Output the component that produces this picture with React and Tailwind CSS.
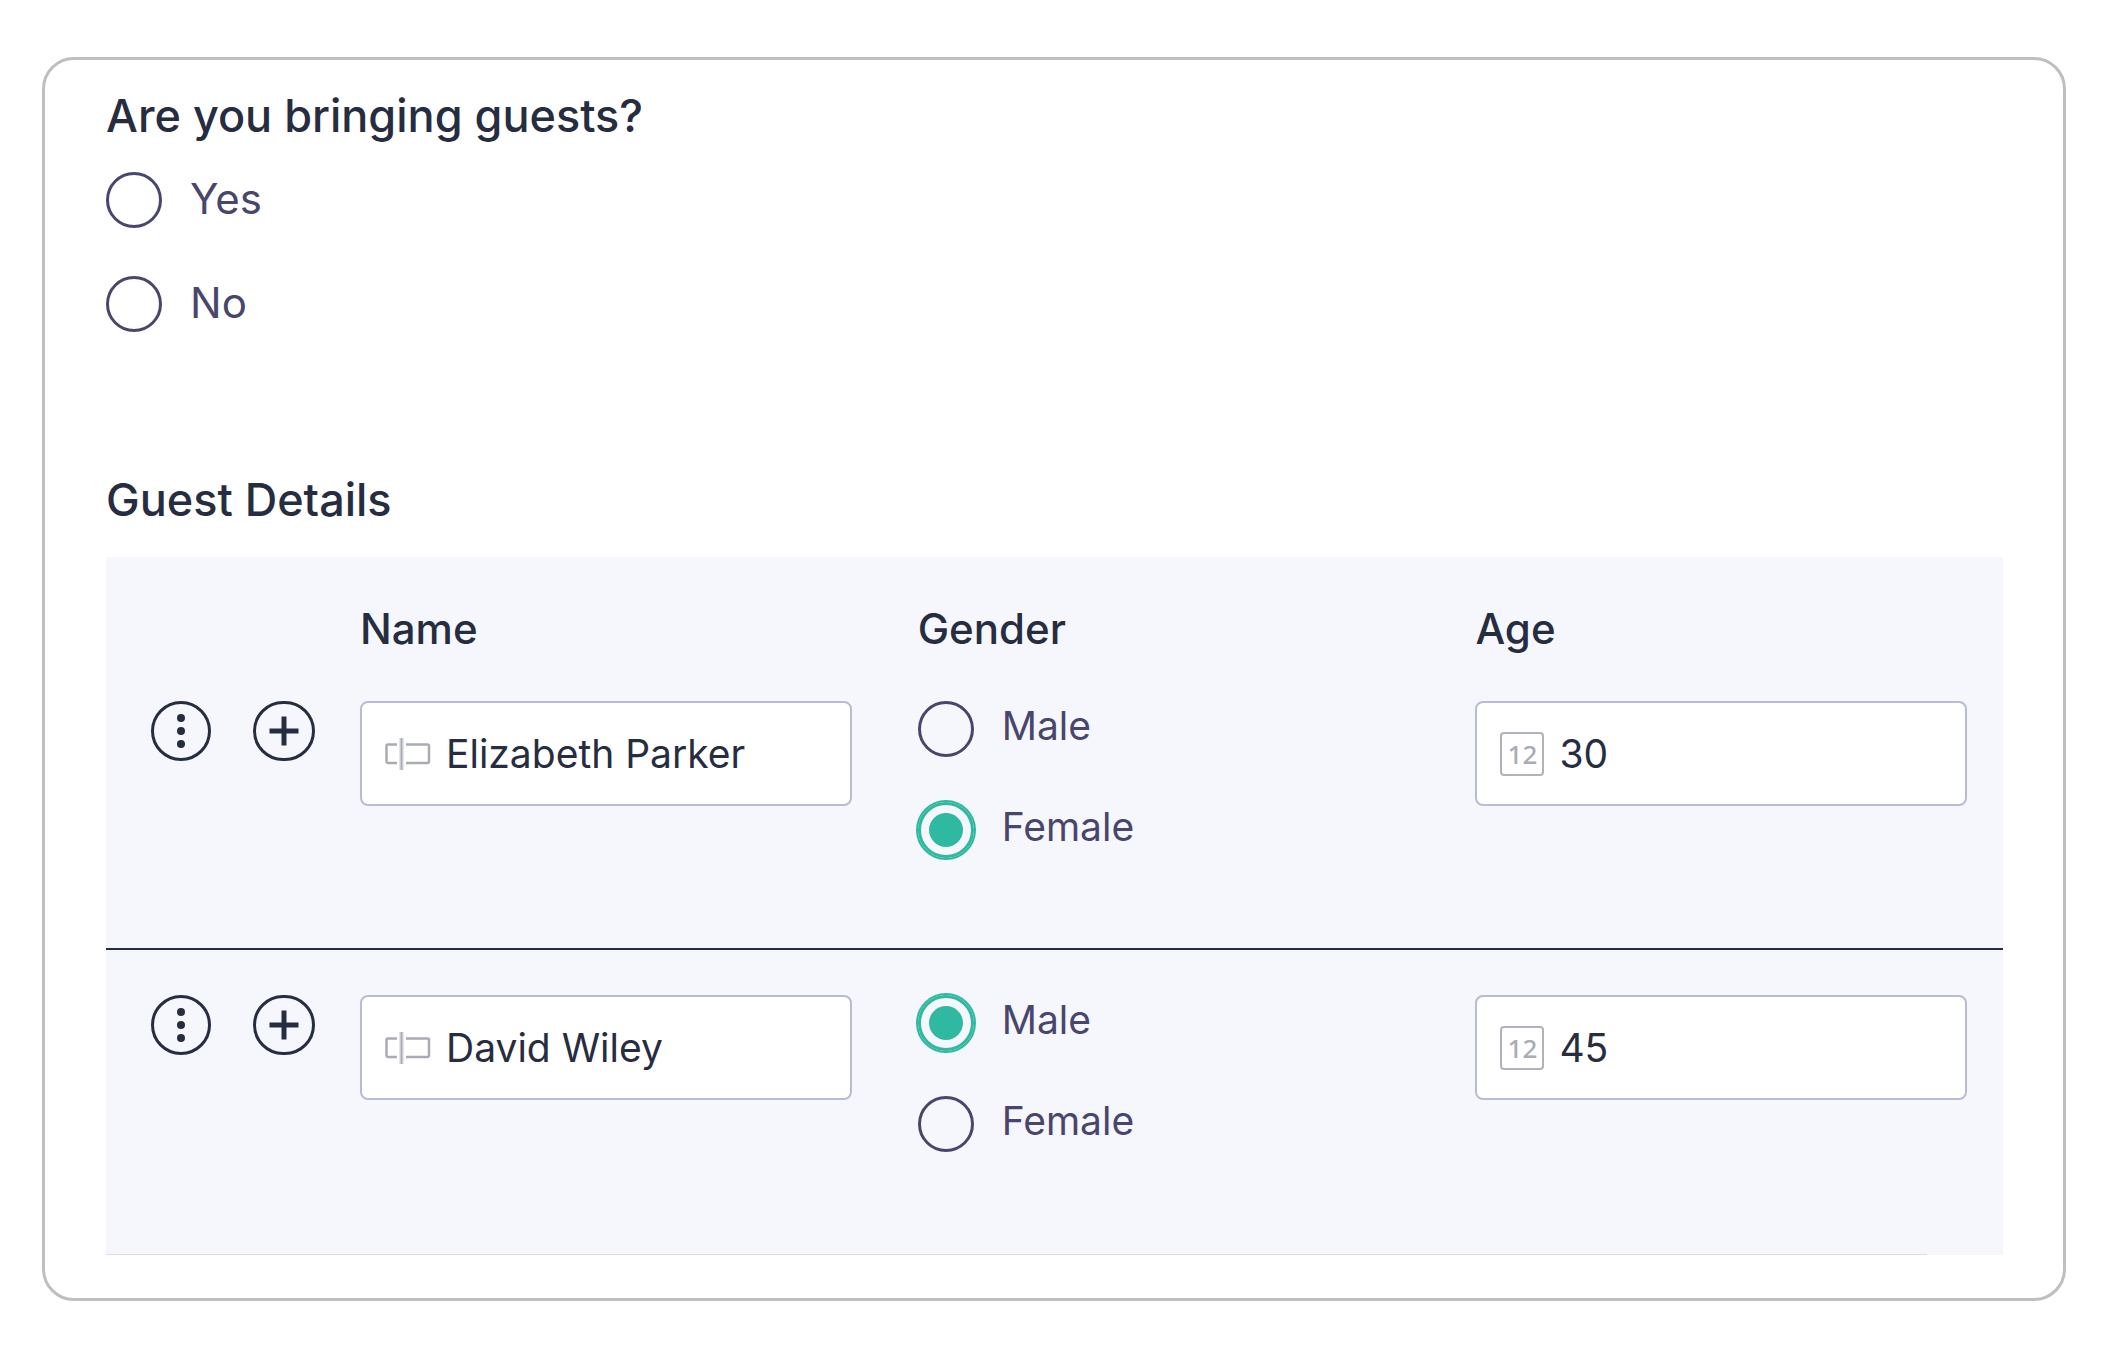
import React from "react";

const guests = [
  { id: "guest-1", name: "Elizabeth Parker", gender: "Female", age: "30" },
  { id: "guest-2", name: "David Wiley", gender: "Male", age: "45" },
];

function Radio({ name, label, checked = false, textClass }) {
  return (
    <label className="flex h-14 items-center gap-7 text-[#48466d]">
      <input
        type="radio"
        name={name}
        value={label}
        defaultChecked={checked}
        className="grid size-14 shrink-0 appearance-none place-items-center rounded-full border-3 border-[#48466d] checked:border-3 checked:border-[#2fb9a0] checked:outline-2 checked:outline-[#2fb9a0] checked:before:size-[34px] checked:before:rounded-full checked:before:bg-[#2fb9a0]"
      />
      <span className={textClass}>{label}</span>
    </label>
  );
}

function TextFieldIcon() {
  return (
    <svg width="46" height="32" viewBox="0 0 46 32" fill="none" stroke="#a9acb5" strokeWidth="2.5" className="shrink-0" aria-hidden="true">
      <path d="M12 6.500H3a1.500 1.500 0 0 0-1.500 1.500v15.500a1.500 1.500 0 0 0 1.500 1.500H12" />
      <path d="M21 6.500h21.500a1.500 1.500 0 0 1 1.500 1.500v15.500a1.500 1.500 0 0 1-1.500 1.500H21" />
      <path d="M16.500 0v32" stroke="#c9cbd0" strokeWidth="4" />
      <path d="M16.500 0v32" strokeWidth="1" />
    </svg>
  );
}

function NumberIcon() {
  return (
    <span
      aria-hidden="true"
      className="grid size-11 shrink-0 place-items-center rounded-sm border-2 border-[#b0b3b9] font-['Noto_Sans',sans-serif] text-[26px] leading-8 font-medium text-[#a9acb5]"
    >
      12
    </span>
  );
}

function Field({ icon, label, value }) {
  return (
    <div className="flex h-[105px] items-center gap-[15px] rounded-lg border-2 border-[#b9bbd6] bg-white px-[23px]">
      {icon}
      <input aria-label={label} defaultValue={value} className="w-full min-w-0 bg-transparent text-[39px] leading-12 text-[#262d40] outline-none" />
    </div>
  );
}

function GuestRow({ guest, className }) {
  return (
    <tr className={className}>
      <td className="pt-[45px] pl-[45px] align-top">
        <div className="flex gap-[42px]">
          <button type="button" aria-label="Row options" className="grid size-15 place-items-center rounded-full border-3 border-[#262d40]">
            <svg width="10" height="36" viewBox="0 0 10 36" fill="#262d40" aria-hidden="true">
              <circle cx="5" cy="5" r="4" />
              <circle cx="5" cy="18" r="4" />
              <circle cx="5" cy="31" r="4" />
            </svg>
          </button>
          <button type="button" aria-label="Add row" className="grid h-15 w-[62px] place-items-center rounded-full border-3 border-[#262d40]">
            <svg width="30" height="30" viewBox="0 0 30 30" stroke="#262d40" strokeWidth="5" aria-hidden="true">
              <path d="M15 0.500v29M0.500 15h29" />
            </svg>
          </button>
        </div>
      </td>
      <td className="pt-[45px] pr-[66px] align-top">
        <Field icon={<TextFieldIcon />} label="Name" value={guest.name} />
      </td>
      <td className="pt-[45px] align-top">
        <div className="flex flex-col gap-[45px]">
          {["Male", "Female"].map((g) => (
            <Radio key={g} name={guest.id} label={g} checked={guest.gender === g} textClass="pb-1.5 text-[39px] leading-12" />
          ))}
        </div>
      </td>
      <td className="pt-[45px] pr-9 align-top">
        <Field icon={<NumberIcon />} label="Age" value={guest.age} />
      </td>
    </tr>
  );
}

export default function App() {
  return (
    <main className="min-h-screen bg-white pt-[57px] pr-[43px] pb-[57px] pl-[42px] font-['Inter',sans-serif] text-[#262d40]">
      <form className="rounded-[32px] border-3 border-[#bdbfc0] pt-7 pr-[60px] pb-[43px] pl-[61px]">
        <fieldset>
          <legend className="text-[45px] leading-14 font-medium">Are you bringing guests?</legend>
          <div className="mt-7 flex flex-col gap-12">
            <Radio name="bringing" label="Yes" textClass="pb-0.5 text-[42px] leading-12" />
            <Radio name="bringing" label="No" textClass="pb-0.5 text-[42px] leading-12" />
          </div>
        </fieldset>
        <h2 className="mt-[140px] text-[45px] leading-14 font-medium">Guest Details</h2>
        <div className="mt-[29px] bg-[#f6f7fd]">
          <table className="w-full table-fixed text-left">
            <colgroup>
              <col className="w-[254px]" />
              <col className="w-[29.4%]" />
              <col className="w-[29.4%]" />
              <col />
            </colgroup>
            <thead>
              <tr className="h-[99px] text-[42px] leading-12">
                <td />
                <th scope="col" className="pt-12 align-top font-medium">Name</th>
                <th scope="col" className="pt-12 align-top font-medium">Gender</th>
                <th scope="col" className="pt-12 align-top font-medium">Age</th>
              </tr>
            </thead>
            <tbody>
              <GuestRow guest={guests[0]} className="h-[293px]" />
              <GuestRow guest={guests[1]} className="h-[305px] border-t-2 border-[#262d40]" />
            </tbody>
          </table>
          <div className="mr-19 h-px bg-[#dcdde2]" />
        </div>
      </form>
    </main>
  );
}
